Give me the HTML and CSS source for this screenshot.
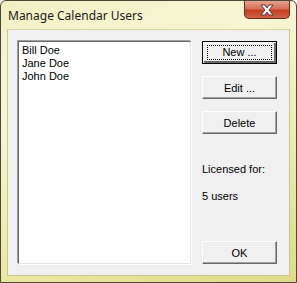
FILE: index.html
```html
<html lang="en">
<head>
    <meta charset="UTF-8">
    <title>Manage Calendar Users</title>
    <link rel="stylesheet" href="styles.css">
</head>
<body>
    <div class="window">
        <div class="titlebar">
            <div class="title">Manage Calendar Users</div>
            <div class="close">
                <svg width="18" height="12" viewBox="0 0 18 12">
                    <path d="M3 1 H7 L9 4 L11 1 H15 L11 6 L15 11 H11 L9 8 L7 11 H3 L7 6 Z" fill="#fff" stroke="#5a3a3a" stroke-width="1" stroke-linejoin="round"/>
                </svg>
            </div>
        </div>
        <div class="client">
            <div class="listbox">
                <div class="item">Bill Doe</div>
                <div class="item">Jane Doe</div>
                <div class="item">John Doe</div>
            </div>
            <div class="side">
                <button class="btn default"><span class="focus">New ...</span></button>
                <button class="btn">Edit ...</button>
                <button class="btn">Delete</button>
                <div class="label first">Licensed for:</div>
                <div class="label">5 users</div>
                <button class="btn ok">OK</button>
            </div>
        </div>
    </div>
</body>
</html>
```

FILE: styles.css
```css
body {
    margin: 0;
    padding: 0;
    background: #fff;
}
.window {
    position: relative;
    width: 297px;
    height: 283px;
    box-sizing: border-box;
    border: 1px solid #4a4a3a;
    border-radius: 6px 6px 0 0;
    background: linear-gradient(160deg, #f2f1c4 0%, #f7f6d4 30%, #eeeba8 65%, #dedb88 100%);
    padding: 0 6px;
}
.titlebar {
    height: 28px;
    display: flex;
    align-items: center;
}
.title {
    font-family: "Noto Sans", sans-serif;
    font-size: 12px;
    color: #1a1a1a;
    padding-left: 1px;
    padding-top: 1px;
}
.close {
    position: absolute;
    top: 0;
    right: 6px;
    width: 46px;
    height: 18px;
    box-sizing: border-box;
    border: 1px solid #6b2c22;
    border-top: none;
    border-radius: 0 0 5px 5px;
    background: linear-gradient(#e8a090 0%, #d5705a 45%, #c2401f 55%, #d0644a 100%);
    display: flex;
    align-items: center;
    justify-content: center;
}
.client {
    height: 247px;
    box-sizing: border-box;
    border: 1px solid #c9c68e;
    border-top-color: #d6d4a0;
    background: #f0f0f0;
    display: flex;
    padding: 11px 10px 11px 10px;
    gap: 11px;
}
.listbox {
    width: 173px;
    box-sizing: border-box;
    background: #fff;
    border-style: solid;
    border-width: 1px;
    border-color: #696969 #e3e3e3 #e3e3e3 #696969;
    box-shadow: -1px -1px 0 #a0a0a0, 1px 1px 0 #fff;
    padding: 2px 3px;
    font-family: "Liberation Sans", Arial, sans-serif;
    font-size: 11px;
    color: #000;
}
.item {
    height: 13px;
    line-height: 13px;
}
.side {
    width: 75px;
    display: flex;
    flex-direction: column;
}
.btn {
    width: 75px;
    height: 23px;
    box-sizing: border-box;
    background: #f0f0f0;
    border-style: solid;
    border-width: 1px;
    border-color: #fff #696969 #696969 #fff;
    box-shadow: inset -1px -1px 0 #a0a0a0;
    font-family: "Liberation Sans", Arial, sans-serif;
    font-size: 11px;
    color: #000;
    padding: 0;
    margin-bottom: 12px;
}
.btn.default {
    border: 1px solid #000;
    box-shadow: inset 1px 1px 0 #fff, inset -2px -2px 0 #696969, inset -1px -1px 0 #a0a0a0;
}
.focus {
    display: block;
    margin: 3px 4px;
    height: 13px;
    line-height: 13px;
    border: 1px dotted #000;
}
.label {
    font-family: "Liberation Sans", Arial, sans-serif;
    font-size: 11px;
    color: #000;
    height: 13px;
    line-height: 13px;
    margin-top: 14px;
}
.label.first {
    margin-top: 17px;
}
.btn.ok {
    margin-top: auto;
    margin-bottom: 0;
}
```
